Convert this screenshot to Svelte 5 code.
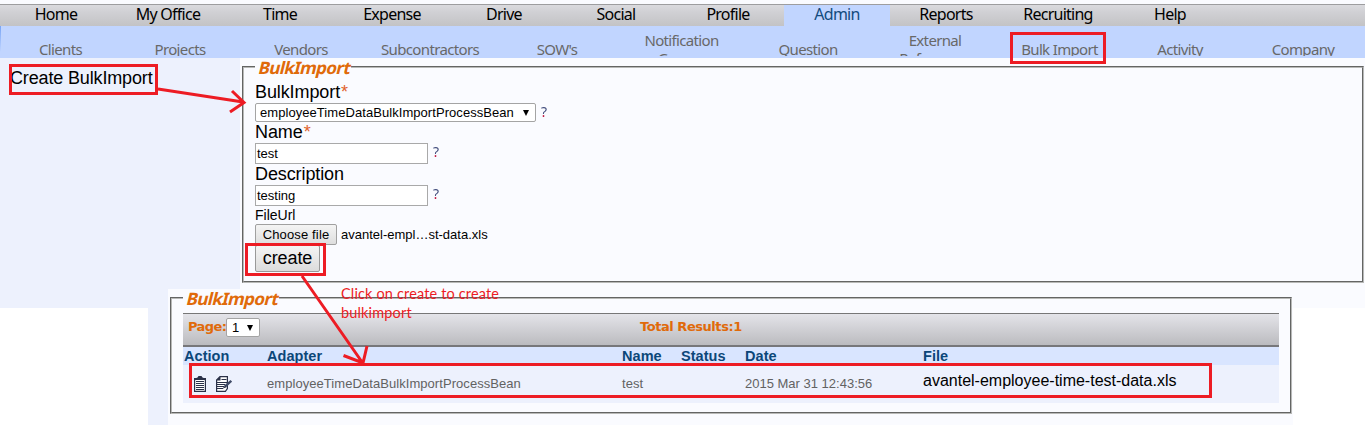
<script>
  const tabs = [
    ['Home', 112], ['My Office', 112], ['Time', 112], ['Expense', 112], ['Drive', 112], ['Social', 112],
    ['Profile', 112], ['Admin', 106], ['Reports', 112], ['Recruiting', 112], ['Help', 112]
  ];
  const sections = [
    ['Clients', 121], ['Projects', 118], ['Vendors', 124], ['Subcontractors', 134], ["SOW's", 120],
    ['Notification Groups', 129], ['Question', 124], ['External References', 130],
    ['Bulk Import', 119], ['Activity', 122], ['Company', 124]
  ];
</script>

<div class="page">
  <nav class="tabs">
    {#each tabs as [label, w]}
      <a class:active={label === 'Admin'} style="width:{w}px">{label}</a>
    {/each}
  </nav>
  <nav class="sections">
    {#each sections as [label, w]}
      <a class:double={w > 128 && label.includes(' ')} style="width:{w}px">
        {#each (w > 128 ? label.split(' ') : [label]) as line}<span>{line}</span>{/each}
      </a>
    {/each}
  </nav>

  <div class="body">
    <aside><span>Create BulkImport</span></aside>
    <main>
      <section class="box form">
        <h2><span>BulkImport</span></h2>
        <label class="l1">BulkImport<i>*</i></label>
        <div class="line"><div class="select"><span>employeeTimeDataBulkImportProcessBean</span><b></b></div><em>?</em></div>
        <label class="l2">Name<i>*</i></label>
        <div class="line"><div class="input">test</div><em>?</em></div>
        <label class="l3">Description</label>
        <div class="line"><div class="input">testing</div><em>?</em></div>
        <label class="l4">FileUrl</label>
        <div class="line"><div class="file">Choose file</div><span class="fname">avantel-empl…st-data.xls</span></div>
        <div class="create">create</div>
      </section>
    </main>
  </div>

  <div class="results">
    <section class="box list">
      <h2><span>BulkImport</span></h2>
      <div class="pager">
        <strong class="pg">Page:</strong>
        <div class="select small"><span>1</span><b></b></div>
        <strong class="total">Total Results:1</strong>
      </div>
      <div class="grid head">
        <span>Action</span><span>Adapter</span><span>Name</span><span>Status</span><span>Date</span><span>File</span>
      </div>
      <div class="grid row">
        <span class="icons">
          <svg width="12" height="16" viewBox="0 0 12 16">
            <path d="M.6 2.600h10.800v12.800H.6z" fill="#fff" stroke="#2b3148" stroke-width="1.200" />
            <path d="M1 4V2.500L3.500 1.500 4.500 0h3l1 1.500L11 2.500V4z" fill="#2b3148" />
            <path d="M2 5.500h8M2 7.500h8M2 9.500h8M2 11.500h8M2 13.500h8" stroke="#2b3148" />
          </svg>
          <svg width="16" height="16" viewBox="0 0 16 16">
            <path d="M4 .6h7.400v12l-2 2.800H.6V4z" fill="#fff" stroke="#2b3148" stroke-width="1.200" />
            <path d="M4.500 0V4.500H0z" fill="#2b3148" />
            <path d="M5.500 3.500h5M1 6.500h10M1 8.500h8M1 10.500h7M1 12.500h6" stroke="#2b3148" />
            <path d="M15.300 4.800 9 10.500" stroke="#3f4a66" stroke-width="2.400" />
            <path d="m9 9.500-2.500 3.300 3.800-1.500z" fill="#2b3148" />
          </svg>
        </span>
        <span class="sp">employeeTimeDataBulkImportProcessBean</span><span class="tst">test</span><span></span><span class="dt">2015 Mar 31 12:43:56</span>
        <span class="link">avantel-employee-time-test-data.xls</span>
      </div>
    </section>
  </div>

  <svg class="marks" width="1366" height="426" viewBox="0 0 1366 426" fill="none" stroke="#ed1c24" stroke-width="3">
    <rect x="10.500" y="65.500" width="146" height="28" />
    <rect x="1011.500" y="33.500" width="93" height="29" />
    <rect x="246.500" y="244.500" width="78" height="30" />
    <rect x="190.500" y="364.500" width="1020" height="32" />
    <path d="M158 89 243 102M232 91l12 11.500L230 112" />
    <path d="M302 276 362 362M343.500 355.500 363 363 367 346" />
  </svg>
  <p class="note">Click on create to create<br />bulkimport</p>
</div>

<style>
  :global(body) { background: #fff; }
  * { box-sizing: border-box; }
  .page { position: relative; width: 1365px; height: 425px; overflow: hidden; padding-top: 4px; background: #fff; font-family: "Liberation Sans", Arial, sans-serif; color: #000; box-shadow: inset 0 4px #fafbff; }
  .tabs { height: 22px; display: flex; border-top: 1px solid #9d9d9f; background: linear-gradient(#dadade, #d0d0d4 35%, #c3c3c5); font: 16px/18px "Noto Sans", Tahoma, sans-serif; letter-spacing: -.75px; }
  .tabs a { text-align: center; }
  .tabs .active { background: #c1d5ff; color: #134b7d; }
  .sections { height: 32px; padding-bottom: 2px; display: flex; background: linear-gradient(#79a5f5, #c1d5ff) 0 0 / 1px 26px no-repeat #c1d5ff; font: 15px/19px "Noto Sans", Tahoma, sans-serif; letter-spacing: -.65px; color: #686868; }
  .sections a { height: 30px; padding-top: 14px; overflow: hidden; text-align: center; flex-shrink: 0; }
  .sections .double { padding-top: 5px; }
  .sections .double span + span { margin-top: -1px; }
  .sections span { display: block; }
  .body { display: flex; height: 250px; }
  aside { width: 240px; background: #edf1fd; padding: 10px 0 0 10px; font-size: 18px; line-height: 20px; white-space: nowrap; letter-spacing: -.15px; }
  main { flex: 1; background: #fafbff; padding: 8px 1px 0 2px; }
  .box { border: 2px groove #b8b9b7; }
  h2 { margin: -10px 0 0; width: 96px; height: 20px; padding-left: 4px; background: #fafbff; font: bold 17px/20px "Noto Sans", Tahoma, sans-serif; letter-spacing: -.6px; color: #e06a0a; white-space: nowrap; }
  h2 span { display: inline-block; transform: skewX(-14deg); }
  .form { height: 217px; padding-left: 11px; }
  .form label { display: block; font-size: 18px; line-height: 20px; letter-spacing: -.1px; }
  .form label i { font-style: normal; color: #e0622c; margin-left: 1px; }
  .form .l1 { height: 25px; padding-top: 4px; }
  .form .l2 { height: 21px; }
  .form .l3 { height: 21px; }
  .form .l4 { height: 18px; font-size: 14px; line-height: 19px; letter-spacing: 0; }
  .line { display: flex; }
  .line em { height: 18px; font: 14px/17px "Noto Sans", sans-serif; margin-left: 5px; color: transparent; background: linear-gradient(#3c4878 0 11px, #c01840 11px); background-clip: text; }
  .select { display: flex; align-items: center; justify-content: space-between; width: 281px; height: 19px; padding: 0 6px 0 4px; border: 1px solid #a4a4a4; border-radius: 2px; background: #fff; font-size: 13px; letter-spacing: .06px; }
  .select b { border: 3.500px solid transparent; border-top: 6px solid #000; border-bottom: 0; }
  .input { width: 173px; height: 21px; border: 1px solid #a9a9a9; background: #fff; padding-left: 1px; font-size: 13px; line-height: 20px; }
  .file { width: 82px; height: 21px; border: 1px solid #a0a0a0; border-radius: 2px; background: linear-gradient(#f4f4f4, #dedede); text-align: center; font-size: 13px; line-height: 19px; letter-spacing: .15px; }
  .fname { margin-left: 4px; font-size: 13px; line-height: 21px; }
  .create { width: 65px; height: 27px; border: 1px solid #999; border-radius: 2px; background: linear-gradient(#f4f4f4, #dcdcdc); text-align: center; font-size: 18px; line-height: 25px; letter-spacing: -.1px; }
  .results { position: relative; width: 1145px; height: 136px; margin: -19px 0 0 148px; border-left: 20px solid #edf1fd; background: #fafbff; padding: 8px 1px 0 2px; }
  .list { height: 117px; padding-left: 11px; }
  .pager { display: flex; width: 1096px; height: 34px; margin-top: 4px; border-top: 1px solid #777; border-bottom: 2px solid #77777a; background: linear-gradient(#e4e4e9, #bbbbbf); padding: 4px 0 0 5px; font: bold 13px/17px "DejaVu Sans", Verdana, sans-serif; color: #e06a0a; }
  .pg { width: 38px; letter-spacing: -.6px; }
  .small { width: 34px; padding-left: 5px; color: #000; font: 13px "Liberation Sans", sans-serif; }
  .total { margin-left: 380px; letter-spacing: -.45px; }
  .grid { display: grid; grid-template-columns: 83px 355px 59px 64px 178px 1fr; width: 1096px; padding-left: 1px; white-space: nowrap; }
  .head { height: 18px; background: #d9e5ff; color: #0c4779; font-weight: bold; font-size: 14.500px; line-height: 18px; letter-spacing: .05px; }
  .row { height: 38px; background: #edf1fd; color: #626262; font-size: 13px; line-height: 38px; letter-spacing: .06px; }
  .dt { letter-spacing: 0; }
  .icons { display: flex; gap: 10px; padding: 11px 0 0 10px; }
  .link { color: #000; font-size: 16px; line-height: 32px; letter-spacing: 0; }
  .marks { position: absolute; left: 0; top: 0; }
  .note { position: absolute; left: 341px; top: 284px; margin: 0; color: #ed1c24; font: 14.500px/19px Lato, Calibri, sans-serif; letter-spacing: .15px; white-space: nowrap; }
</style>
